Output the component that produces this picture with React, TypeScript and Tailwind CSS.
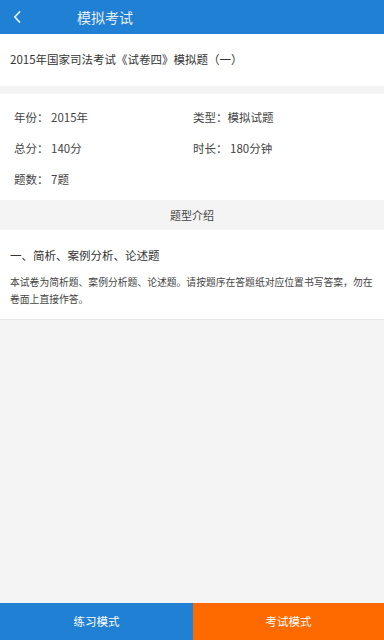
import React from "react";

export default function App() {
  const font = { fontFamily: '"Noto Sans CJK SC", "Noto Sans", sans-serif' };
  return (
    <div className="w-[384px] h-[640px] flex flex-col bg-[#f4f4f4] overflow-hidden" style={font}>
      <div className="h-[34px] bg-[#1f80d4] flex items-center shrink-0">
        <div className="w-[34px] flex items-center pl-[13px]">
          <svg width="9" height="12" viewBox="0 0 9 12" fill="none">
            <path d="M6.5 1 L1.8 6 L6.5 11" stroke="#e8f1fb" strokeWidth="1.8" strokeLinecap="round" strokeLinejoin="round" />
          </svg>
        </div>
        <div className="ml-[43px] text-[14px] text-[#e8f1fb]">模拟考试</div>
      </div>
      <div className="h-[52px] bg-white flex items-center px-[10px] shrink-0">
        <span className="text-[11.5px] text-[#333]">2015年国家司法考试《试卷四》模拟题（一）</span>
      </div>
      <div className="h-[8px] shrink-0" />
      <div className="h-[106px] bg-white grid grid-cols-[179px_1fr] content-start pt-[8px] pl-[14px] text-[11.5px] text-[#444] shrink-0">
        <div className="h-[31px] flex items-center">年份：&nbsp;2015年</div>
        <div className="h-[31px] flex items-center">类型：模拟试题</div>
        <div className="h-[31px] flex items-center">总分：&nbsp;140分</div>
        <div className="h-[31px] flex items-center">时长：&nbsp;180分钟</div>
        <div className="h-[31px] flex items-center">题数：&nbsp;7题</div>
      </div>
      <div className="h-[30px] flex items-center justify-center text-[11px] text-[#444] shrink-0">题型介绍</div>
      <div className="h-[90px] bg-white border-b border-[#e8e8e8] pl-[10px] pr-[8px] pt-[15px] shrink-0">
        <div className="text-[11.5px] text-[#333] leading-[20px]">一、简析、案例分析、论述题</div>
        <div className="mt-[9px] text-[9.8px] text-[#444] leading-[17px]">
          本试卷为简析题、案例分析题、论述题。请按题序在答题纸对应位置书写答案，勿在卷面上直接作答。
        </div>
      </div>
      <div className="flex-1" />
      <div className="h-[37px] flex shrink-0">
        <div className="w-[193px] bg-[#1f80d4] flex items-center justify-center text-[11.5px] text-white">练习模式</div>
        <div className="flex-1 bg-[#ff6a00] flex items-center justify-center text-[11.5px] text-white">考试模式</div>
      </div>
    </div>
  );
}
